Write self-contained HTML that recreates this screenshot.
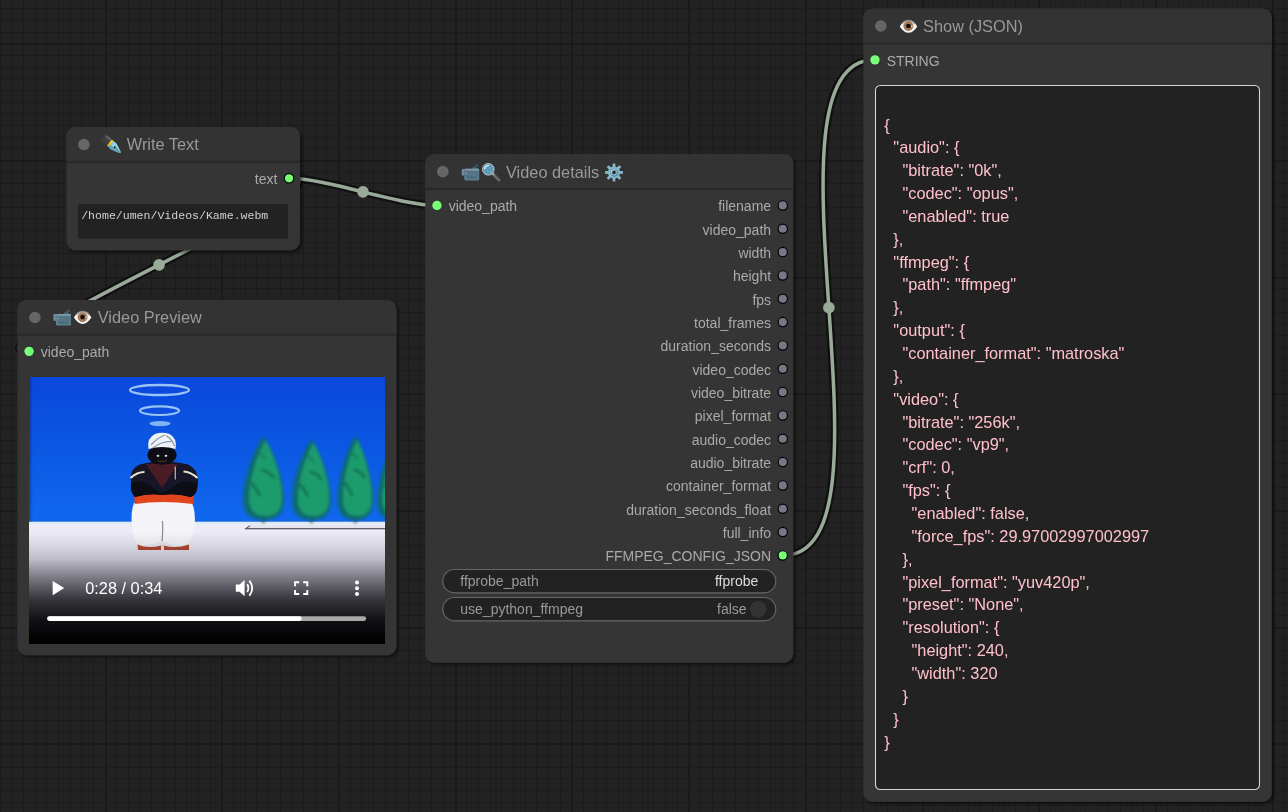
<!DOCTYPE html>
<html><head><meta charset="utf-8">
<style>
html,body{margin:0;padding:0;width:1288px;height:812px;overflow:hidden;background:#222;}
svg{display:block;position:absolute;left:0;top:0;will-change:transform;}
text{font-family:"Liberation Sans",sans-serif;}
.tt{font-size:16.33px;fill:#999;}
.sl{font-size:14px;fill:#AAA;}
.wl{font-size:14px;fill:#999;}
.wv{font-size:14px;fill:#DDD;}
.mono{font-family:"Liberation Mono",monospace;font-size:11.55px;fill:#d0d0d0;}
.js{font-size:16.33px;fill:#FFC0CB;white-space:pre;}
</style></head><body>
<svg width="1288" height="812" viewBox="0 0 1288 812">
<defs>
<filter id="pblur" x="-20%" y="-20%" width="140%" height="140%"><feGaussianBlur stdDeviation="0.3"/></filter>
<filter id="sh" x="-10%" y="-10%" width="120%" height="120%">
<feDropShadow dx="2.33" dy="2.33" stdDeviation="1.75" flood-color="#000" flood-opacity="0.5"/>
</filter>
</defs>
<rect width="1288" height="812" fill="#222"/>
<g shape-rendering="crispEdges"><rect x="0" y="0" width="1" height="812" fill="#1c1c1c"/><rect x="11" y="0" width="1" height="812" fill="#1c1c1c"/><rect x="23" y="0" width="1" height="812" fill="#1c1c1c"/><rect x="35" y="0" width="1" height="812" fill="#1c1c1c"/><rect x="46" y="0" width="1" height="812" fill="#1c1c1c"/><rect x="58" y="0" width="1" height="812" fill="#1c1c1c"/><rect x="70" y="0" width="1" height="812" fill="#1c1c1c"/><rect x="81" y="0" width="1" height="812" fill="#1c1c1c"/><rect x="93" y="0" width="1" height="812" fill="#1c1c1c"/><rect x="105" y="0" width="2" height="812" fill="#1a1a1a"/><rect x="116" y="0" width="1" height="812" fill="#1c1c1c"/><rect x="128" y="0" width="1" height="812" fill="#1c1c1c"/><rect x="140" y="0" width="1" height="812" fill="#1c1c1c"/><rect x="151" y="0" width="1" height="812" fill="#1c1c1c"/><rect x="163" y="0" width="1" height="812" fill="#1c1c1c"/><rect x="175" y="0" width="1" height="812" fill="#1c1c1c"/><rect x="186" y="0" width="1" height="812" fill="#1c1c1c"/><rect x="198" y="0" width="1" height="812" fill="#1c1c1c"/><rect x="210" y="0" width="1" height="812" fill="#1c1c1c"/><rect x="221" y="0" width="2" height="812" fill="#1a1a1a"/><rect x="233" y="0" width="1" height="812" fill="#1c1c1c"/><rect x="245" y="0" width="1" height="812" fill="#1c1c1c"/><rect x="256" y="0" width="1" height="812" fill="#1c1c1c"/><rect x="268" y="0" width="1" height="812" fill="#1c1c1c"/><rect x="280" y="0" width="1" height="812" fill="#1c1c1c"/><rect x="291" y="0" width="1" height="812" fill="#1c1c1c"/><rect x="303" y="0" width="1" height="812" fill="#1c1c1c"/><rect x="315" y="0" width="1" height="812" fill="#1c1c1c"/><rect x="326" y="0" width="1" height="812" fill="#1c1c1c"/><rect x="338" y="0" width="2" height="812" fill="#1a1a1a"/><rect x="350" y="0" width="1" height="812" fill="#1c1c1c"/><rect x="361" y="0" width="1" height="812" fill="#1c1c1c"/><rect x="373" y="0" width="1" height="812" fill="#1c1c1c"/><rect x="385" y="0" width="1" height="812" fill="#1c1c1c"/><rect x="396" y="0" width="1" height="812" fill="#1c1c1c"/><rect x="408" y="0" width="1" height="812" fill="#1c1c1c"/><rect x="420" y="0" width="1" height="812" fill="#1c1c1c"/><rect x="431" y="0" width="1" height="812" fill="#1c1c1c"/><rect x="443" y="0" width="1" height="812" fill="#1c1c1c"/><rect x="455" y="0" width="2" height="812" fill="#1a1a1a"/><rect x="466" y="0" width="1" height="812" fill="#1c1c1c"/><rect x="478" y="0" width="1" height="812" fill="#1c1c1c"/><rect x="490" y="0" width="1" height="812" fill="#1c1c1c"/><rect x="501" y="0" width="1" height="812" fill="#1c1c1c"/><rect x="513" y="0" width="1" height="812" fill="#1c1c1c"/><rect x="525" y="0" width="1" height="812" fill="#1c1c1c"/><rect x="536" y="0" width="1" height="812" fill="#1c1c1c"/><rect x="548" y="0" width="1" height="812" fill="#1c1c1c"/><rect x="560" y="0" width="1" height="812" fill="#1c1c1c"/><rect x="571" y="0" width="2" height="812" fill="#1a1a1a"/><rect x="583" y="0" width="1" height="812" fill="#1c1c1c"/><rect x="595" y="0" width="1" height="812" fill="#1c1c1c"/><rect x="606" y="0" width="1" height="812" fill="#1c1c1c"/><rect x="618" y="0" width="1" height="812" fill="#1c1c1c"/><rect x="630" y="0" width="1" height="812" fill="#1c1c1c"/><rect x="642" y="0" width="1" height="812" fill="#1c1c1c"/><rect x="653" y="0" width="1" height="812" fill="#1c1c1c"/><rect x="665" y="0" width="1" height="812" fill="#1c1c1c"/><rect x="677" y="0" width="1" height="812" fill="#1c1c1c"/><rect x="688" y="0" width="2" height="812" fill="#1a1a1a"/><rect x="700" y="0" width="1" height="812" fill="#1c1c1c"/><rect x="712" y="0" width="1" height="812" fill="#1c1c1c"/><rect x="723" y="0" width="1" height="812" fill="#1c1c1c"/><rect x="735" y="0" width="1" height="812" fill="#1c1c1c"/><rect x="747" y="0" width="1" height="812" fill="#1c1c1c"/><rect x="758" y="0" width="1" height="812" fill="#1c1c1c"/><rect x="770" y="0" width="1" height="812" fill="#1c1c1c"/><rect x="782" y="0" width="1" height="812" fill="#1c1c1c"/><rect x="793" y="0" width="1" height="812" fill="#1c1c1c"/><rect x="805" y="0" width="2" height="812" fill="#1a1a1a"/><rect x="817" y="0" width="1" height="812" fill="#1c1c1c"/><rect x="828" y="0" width="1" height="812" fill="#1c1c1c"/><rect x="840" y="0" width="1" height="812" fill="#1c1c1c"/><rect x="852" y="0" width="1" height="812" fill="#1c1c1c"/><rect x="863" y="0" width="1" height="812" fill="#1c1c1c"/><rect x="875" y="0" width="1" height="812" fill="#1c1c1c"/><rect x="887" y="0" width="1" height="812" fill="#1c1c1c"/><rect x="898" y="0" width="1" height="812" fill="#1c1c1c"/><rect x="910" y="0" width="1" height="812" fill="#1c1c1c"/><rect x="922" y="0" width="2" height="812" fill="#1a1a1a"/><rect x="933" y="0" width="1" height="812" fill="#1c1c1c"/><rect x="945" y="0" width="1" height="812" fill="#1c1c1c"/><rect x="957" y="0" width="1" height="812" fill="#1c1c1c"/><rect x="968" y="0" width="1" height="812" fill="#1c1c1c"/><rect x="980" y="0" width="1" height="812" fill="#1c1c1c"/><rect x="992" y="0" width="1" height="812" fill="#1c1c1c"/><rect x="1003" y="0" width="1" height="812" fill="#1c1c1c"/><rect x="1015" y="0" width="1" height="812" fill="#1c1c1c"/><rect x="1027" y="0" width="1" height="812" fill="#1c1c1c"/><rect x="1038" y="0" width="2" height="812" fill="#1a1a1a"/><rect x="1050" y="0" width="1" height="812" fill="#1c1c1c"/><rect x="1062" y="0" width="1" height="812" fill="#1c1c1c"/><rect x="1073" y="0" width="1" height="812" fill="#1c1c1c"/><rect x="1085" y="0" width="1" height="812" fill="#1c1c1c"/><rect x="1097" y="0" width="1" height="812" fill="#1c1c1c"/><rect x="1108" y="0" width="1" height="812" fill="#1c1c1c"/><rect x="1120" y="0" width="1" height="812" fill="#1c1c1c"/><rect x="1132" y="0" width="1" height="812" fill="#1c1c1c"/><rect x="1143" y="0" width="1" height="812" fill="#1c1c1c"/><rect x="1155" y="0" width="2" height="812" fill="#1a1a1a"/><rect x="1167" y="0" width="1" height="812" fill="#1c1c1c"/><rect x="1178" y="0" width="1" height="812" fill="#1c1c1c"/><rect x="1190" y="0" width="1" height="812" fill="#1c1c1c"/><rect x="1202" y="0" width="1" height="812" fill="#1c1c1c"/><rect x="1213" y="0" width="1" height="812" fill="#1c1c1c"/><rect x="1225" y="0" width="1" height="812" fill="#1c1c1c"/><rect x="1237" y="0" width="1" height="812" fill="#1c1c1c"/><rect x="1248" y="0" width="1" height="812" fill="#1c1c1c"/><rect x="1260" y="0" width="1" height="812" fill="#1c1c1c"/><rect x="1272" y="0" width="2" height="812" fill="#1a1a1a"/><rect x="1283" y="0" width="1" height="812" fill="#1c1c1c"/><rect x="0" y="8" width="1288" height="1" fill="#1c1c1c"/><rect x="0" y="20" width="1288" height="1" fill="#1c1c1c"/><rect x="0" y="32" width="1288" height="1" fill="#1c1c1c"/><rect x="0" y="43" width="1288" height="2" fill="#1a1a1a"/><rect x="0" y="55" width="1288" height="1" fill="#1c1c1c"/><rect x="0" y="67" width="1288" height="1" fill="#1c1c1c"/><rect x="0" y="78" width="1288" height="1" fill="#1c1c1c"/><rect x="0" y="90" width="1288" height="1" fill="#1c1c1c"/><rect x="0" y="102" width="1288" height="1" fill="#1c1c1c"/><rect x="0" y="113" width="1288" height="1" fill="#1c1c1c"/><rect x="0" y="125" width="1288" height="1" fill="#1c1c1c"/><rect x="0" y="137" width="1288" height="1" fill="#1c1c1c"/><rect x="0" y="148" width="1288" height="1" fill="#1c1c1c"/><rect x="0" y="160" width="1288" height="2" fill="#1a1a1a"/><rect x="0" y="172" width="1288" height="1" fill="#1c1c1c"/><rect x="0" y="183" width="1288" height="1" fill="#1c1c1c"/><rect x="0" y="195" width="1288" height="1" fill="#1c1c1c"/><rect x="0" y="207" width="1288" height="1" fill="#1c1c1c"/><rect x="0" y="218" width="1288" height="1" fill="#1c1c1c"/><rect x="0" y="230" width="1288" height="1" fill="#1c1c1c"/><rect x="0" y="242" width="1288" height="1" fill="#1c1c1c"/><rect x="0" y="253" width="1288" height="1" fill="#1c1c1c"/><rect x="0" y="265" width="1288" height="1" fill="#1c1c1c"/><rect x="0" y="277" width="1288" height="2" fill="#1a1a1a"/><rect x="0" y="288" width="1288" height="1" fill="#1c1c1c"/><rect x="0" y="300" width="1288" height="1" fill="#1c1c1c"/><rect x="0" y="312" width="1288" height="1" fill="#1c1c1c"/><rect x="0" y="323" width="1288" height="1" fill="#1c1c1c"/><rect x="0" y="335" width="1288" height="1" fill="#1c1c1c"/><rect x="0" y="347" width="1288" height="1" fill="#1c1c1c"/><rect x="0" y="358" width="1288" height="1" fill="#1c1c1c"/><rect x="0" y="370" width="1288" height="1" fill="#1c1c1c"/><rect x="0" y="382" width="1288" height="1" fill="#1c1c1c"/><rect x="0" y="393" width="1288" height="2" fill="#1a1a1a"/><rect x="0" y="405" width="1288" height="1" fill="#1c1c1c"/><rect x="0" y="417" width="1288" height="1" fill="#1c1c1c"/><rect x="0" y="428" width="1288" height="1" fill="#1c1c1c"/><rect x="0" y="440" width="1288" height="1" fill="#1c1c1c"/><rect x="0" y="452" width="1288" height="1" fill="#1c1c1c"/><rect x="0" y="463" width="1288" height="1" fill="#1c1c1c"/><rect x="0" y="475" width="1288" height="1" fill="#1c1c1c"/><rect x="0" y="487" width="1288" height="1" fill="#1c1c1c"/><rect x="0" y="498" width="1288" height="1" fill="#1c1c1c"/><rect x="0" y="510" width="1288" height="2" fill="#1a1a1a"/><rect x="0" y="522" width="1288" height="1" fill="#1c1c1c"/><rect x="0" y="533" width="1288" height="1" fill="#1c1c1c"/><rect x="0" y="545" width="1288" height="1" fill="#1c1c1c"/><rect x="0" y="557" width="1288" height="1" fill="#1c1c1c"/><rect x="0" y="568" width="1288" height="1" fill="#1c1c1c"/><rect x="0" y="580" width="1288" height="1" fill="#1c1c1c"/><rect x="0" y="592" width="1288" height="1" fill="#1c1c1c"/><rect x="0" y="603" width="1288" height="1" fill="#1c1c1c"/><rect x="0" y="615" width="1288" height="1" fill="#1c1c1c"/><rect x="0" y="627" width="1288" height="2" fill="#1a1a1a"/><rect x="0" y="638" width="1288" height="1" fill="#1c1c1c"/><rect x="0" y="650" width="1288" height="1" fill="#1c1c1c"/><rect x="0" y="662" width="1288" height="1" fill="#1c1c1c"/><rect x="0" y="673" width="1288" height="1" fill="#1c1c1c"/><rect x="0" y="685" width="1288" height="1" fill="#1c1c1c"/><rect x="0" y="697" width="1288" height="1" fill="#1c1c1c"/><rect x="0" y="708" width="1288" height="1" fill="#1c1c1c"/><rect x="0" y="720" width="1288" height="1" fill="#1c1c1c"/><rect x="0" y="732" width="1288" height="1" fill="#1c1c1c"/><rect x="0" y="743" width="1288" height="2" fill="#1a1a1a"/><rect x="0" y="755" width="1288" height="1" fill="#1c1c1c"/><rect x="0" y="767" width="1288" height="1" fill="#1c1c1c"/><rect x="0" y="778" width="1288" height="1" fill="#1c1c1c"/><rect x="0" y="790" width="1288" height="1" fill="#1c1c1c"/><rect x="0" y="802" width="1288" height="1" fill="#1c1c1c"/><rect x="0" y="813" width="1288" height="1" fill="#1c1c1c"/></g>
<path d="M289.05,178.33 C367.12,178.33 -49.00,351.33 29.07,351.33" stroke="rgba(0,0,0,0.5)" stroke-width="8.17" fill="none"/><path d="M289.05,178.33 C367.12,178.33 -49.00,351.33 29.07,351.33" stroke="#9A9" stroke-width="3.5" fill="none"/><circle cx="159.06" cy="264.83" r="5.83" fill="#9A9"/>
<path d="M289.05,178.33 C326.65,178.33 399.37,205.43 436.97,205.43" stroke="rgba(0,0,0,0.5)" stroke-width="8.17" fill="none"/><path d="M289.05,178.33 C326.65,178.33 399.37,205.43 436.97,205.43" stroke="#9A9" stroke-width="3.5" fill="none"/><circle cx="363.01" cy="191.88" r="5.83" fill="#9A9"/>
<path d="M782.75,555.42 C908.78,555.42 748.94,59.83 874.97,59.83" stroke="rgba(0,0,0,0.5)" stroke-width="8.17" fill="none"/><path d="M782.75,555.42 C908.78,555.42 748.94,59.83 874.97,59.83" stroke="#9A9" stroke-width="3.5" fill="none"/><circle cx="828.86" cy="307.63" r="5.83" fill="#9A9"/>
<path d="M75.73,127.0 H290.67 A9.33,9.33 0 0 1 300.0,136.33 V240.86999999999998 A9.33,9.33 0 0 1 290.67,250.2 H75.73 A9.33,9.33 0 0 1 66.4,240.86999999999998 V136.33 A9.33,9.33 0 0 1 75.73,127.0 Z" fill="#353535" filter="url(#sh)"/>
<path d="M75.73,127.0 H290.67 A9.33,9.33 0 0 1 300.0,136.33 V162.0 H66.4 V136.33 A9.33,9.33 0 0 1 75.73,127.0 Z" fill="#333"/>
<rect x="66.4" y="160.83" width="233.6" height="2.33" fill="rgba(0,0,0,0.2)"/>
<circle cx="83.9" cy="144.5" r="5.83" fill="#666"/>
<text x="126.80000000000001" y="150.32999999999998" class="tt">Write Text</text>
<g transform="translate(103.05,136.42) rotate(43) scale(1.0)">
<g filter="url(#pblur)">
<rect x="0.3" y="-3.7" width="9.8" height="7.4" rx="1.3" fill="#3e3e3e"/>
<rect x="1.6" y="-3.5" width="8" height="2.1" rx="1" fill="#676767"/>
</g>
<path d="M10.4,-3.7 L14,-4.2 Q18.5,-3 23.6,-0.8 L24.4,0 L23.6,0.8 Q18.5,3 14,4.2 L10.4,3.7 Z" fill="#8fd2e4"/>
<path d="M10.4,0.9 L18,0.9 L23.6,0.5 L24.4,0 L23.6,0.8 Q18.5,3 14,4.2 L10.4,3.7 Z" fill="#5aaabd"/>
<ellipse cx="9.9" cy="0" rx="1.15" ry="4.2" fill="#f0b800"/>
<ellipse cx="9.5" cy="-1.2" rx="0.55" ry="2.2" fill="#fbe24a"/>
<circle cx="16" cy="0" r="1" fill="#0e0e0e"/>
<circle cx="18" cy="0" r="0.55" fill="#16222a"/><circle cx="19.8" cy="0" r="0.55" fill="#16222a"/><circle cx="21.6" cy="0" r="0.5" fill="#16222a"/><circle cx="23.2" cy="0" r="0.45" fill="#16222a"/>
</g>
<circle cx="289.05" cy="178.32999999999998" r="4.67" fill="#7F7" stroke="#000" stroke-width="1.17"/><text x="277.38" y="184.16" class="sl" text-anchor="end">text</text>
<rect x="78" y="204.2" width="210" height="34.5" fill="#222"/>
<text x="81.2" y="218.8" class="mono">/home/umen/Videos/Kame.webm</text>
<path d="M434.63,154.1 H783.92 A9.33,9.33 0 0 1 793.25,163.43 V653.4699999999999 A9.33,9.33 0 0 1 783.92,662.8 H434.63 A9.33,9.33 0 0 1 425.3,653.4699999999999 V163.43 A9.33,9.33 0 0 1 434.63,154.1 Z" fill="#353535" filter="url(#sh)"/>
<path d="M434.63,154.1 H783.92 A9.33,9.33 0 0 1 793.25,163.43 V189.1 H425.3 V163.43 A9.33,9.33 0 0 1 434.63,154.1 Z" fill="#333"/>
<rect x="425.3" y="187.93" width="367.95" height="2.33" fill="rgba(0,0,0,0.2)"/>
<circle cx="442.8" cy="171.6" r="5.83" fill="#666"/>
<text x="506.0" y="178.43" class="tt">Video details</text>
<g transform="translate(461.7,164.8) scale(1.0)">
<path d="M11.2,3.6 L15.8,0.4" stroke="#3e5868" stroke-width="2" stroke-linecap="round"/>
<rect x="11.5" y="2.9" width="4.6" height="1.6" rx="0.6" fill="#4a6878"/>
<rect x="0" y="4.1" width="3" height="6.8" rx="1.1" fill="#6b8c9c"/>
<rect x="2.6" y="3.9" width="14.9" height="11.7" rx="1.4" fill="#5d7f8f"/>
<rect x="2.6" y="3.9" width="14.9" height="1.8" rx="0.9" fill="#7a9cad"/>
<rect x="4.6" y="6.4" width="11.5" height="7.6" rx="1.6" fill="#4c6c7c"/>
<rect x="5.6" y="7.2" width="9.8" height="4.2" rx="1" fill="#567686"/>
<circle cx="4.1" cy="5.3" r="0.75" fill="#e04848"/>
<circle cx="4.9" cy="8.4" r="0.55" fill="#a8ccdc"/>
</g>
<g transform="translate(481.8,163.2) scale(1.0)">
<path d="M11,10.6 L17.1,16.9" stroke="#6a6a6a" stroke-width="2.9" stroke-linecap="round"/>
<path d="M10.4,10 L12.2,11.8" stroke="#9a9a9a" stroke-width="2.4"/>
<circle cx="6.5" cy="6.1" r="5.8" fill="#5c9ab8" stroke="#c4c4c4" stroke-width="1"/>
<path d="M2.9,5.4 Q3.6,2.6 6.6,2.2" stroke="#e8f4fa" stroke-width="1.3" fill="none" stroke-linecap="round"/>
<path d="M8,9.4 Q9.6,8.8 10.2,7.6" stroke="#8cc0d8" stroke-width="0.9" fill="none"/>
</g>
<g transform="translate(614,172.4) scale(1.0)">
<path d="M-1.6,-5 L-1.25,-9 L1.25,-9 L1.6,-5 Z" transform="rotate(0)" fill="#8ab6c8"/><path d="M-1.6,-5 L-1.25,-9 L1.25,-9 L1.6,-5 Z" transform="rotate(45)" fill="#8ab6c8"/><path d="M-1.6,-5 L-1.25,-9 L1.25,-9 L1.6,-5 Z" transform="rotate(90)" fill="#8ab6c8"/><path d="M-1.6,-5 L-1.25,-9 L1.25,-9 L1.6,-5 Z" transform="rotate(135)" fill="#8ab6c8"/><path d="M-1.6,-5 L-1.25,-9 L1.25,-9 L1.6,-5 Z" transform="rotate(180)" fill="#8ab6c8"/><path d="M-1.6,-5 L-1.25,-9 L1.25,-9 L1.6,-5 Z" transform="rotate(225)" fill="#8ab6c8"/><path d="M-1.6,-5 L-1.25,-9 L1.25,-9 L1.6,-5 Z" transform="rotate(270)" fill="#8ab6c8"/><path d="M-1.6,-5 L-1.25,-9 L1.25,-9 L1.6,-5 Z" transform="rotate(315)" fill="#8ab6c8"/>
<circle r="6" fill="#8ab6c8"/>
<circle r="3.6" fill="none" stroke="#6aa4b8" stroke-width="0.8"/>
<path d="M-1.5,2.8 A3,3 0 0 0 2.8,-1.5" stroke="#4a8ca4" stroke-width="1.1" fill="none"/>
<path d="M-2.5,0.5 A2.6,2.6 0 0 1 0.5,-2.5" stroke="#c8e4ec" stroke-width="0.9" fill="none"/>
<circle r="1.8" fill="#2a2a2a"/>
</g>
<circle cx="436.97" cy="205.43" r="4.67" fill="#7F7"/><text x="448.64000000000004" y="211.26000000000002" class="sl">video_path</text>
<circle cx="782.75" cy="205.43" r="4.67" fill="#778" stroke="#000" stroke-width="1.17"/><text x="771.08" y="211.26000000000002" class="sl" text-anchor="end">filename</text>
<circle cx="782.75" cy="228.763" r="4.67" fill="#778" stroke="#000" stroke-width="1.17"/><text x="771.08" y="234.59300000000002" class="sl" text-anchor="end">video_path</text>
<circle cx="782.75" cy="252.096" r="4.67" fill="#778" stroke="#000" stroke-width="1.17"/><text x="771.08" y="257.926" class="sl" text-anchor="end">width</text>
<circle cx="782.75" cy="275.429" r="4.67" fill="#778" stroke="#000" stroke-width="1.17"/><text x="771.08" y="281.25899999999996" class="sl" text-anchor="end">height</text>
<circle cx="782.75" cy="298.762" r="4.67" fill="#778" stroke="#000" stroke-width="1.17"/><text x="771.08" y="304.592" class="sl" text-anchor="end">fps</text>
<circle cx="782.75" cy="322.095" r="4.67" fill="#778" stroke="#000" stroke-width="1.17"/><text x="771.08" y="327.925" class="sl" text-anchor="end">total_frames</text>
<circle cx="782.75" cy="345.428" r="4.67" fill="#778" stroke="#000" stroke-width="1.17"/><text x="771.08" y="351.258" class="sl" text-anchor="end">duration_seconds</text>
<circle cx="782.75" cy="368.76099999999997" r="4.67" fill="#778" stroke="#000" stroke-width="1.17"/><text x="771.08" y="374.59099999999995" class="sl" text-anchor="end">video_codec</text>
<circle cx="782.75" cy="392.094" r="4.67" fill="#778" stroke="#000" stroke-width="1.17"/><text x="771.08" y="397.924" class="sl" text-anchor="end">video_bitrate</text>
<circle cx="782.75" cy="415.427" r="4.67" fill="#778" stroke="#000" stroke-width="1.17"/><text x="771.08" y="421.257" class="sl" text-anchor="end">pixel_format</text>
<circle cx="782.75" cy="438.76" r="4.67" fill="#778" stroke="#000" stroke-width="1.17"/><text x="771.08" y="444.59" class="sl" text-anchor="end">audio_codec</text>
<circle cx="782.75" cy="462.093" r="4.67" fill="#778" stroke="#000" stroke-width="1.17"/><text x="771.08" y="467.923" class="sl" text-anchor="end">audio_bitrate</text>
<circle cx="782.75" cy="485.426" r="4.67" fill="#778" stroke="#000" stroke-width="1.17"/><text x="771.08" y="491.256" class="sl" text-anchor="end">container_format</text>
<circle cx="782.75" cy="508.75899999999996" r="4.67" fill="#778" stroke="#000" stroke-width="1.17"/><text x="771.08" y="514.5889999999999" class="sl" text-anchor="end">duration_seconds_float</text>
<circle cx="782.75" cy="532.092" r="4.67" fill="#778" stroke="#000" stroke-width="1.17"/><text x="771.08" y="537.922" class="sl" text-anchor="end">full_info</text>
<circle cx="782.75" cy="555.425" r="4.67" fill="#7F7" stroke="#000" stroke-width="1.17"/><text x="771.08" y="561.255" class="sl" text-anchor="end">FFMPEG_CONFIG_JSON</text>
<rect x="442.8" y="569.5" width="332.95" height="23.33" rx="11.67" fill="#222" stroke="#666" stroke-width="1.17"/>
<text x="460.3" y="585.83" class="wl">ffprobe_path</text>
<text x="758.25" y="585.83" class="wv" text-anchor="end">ffprobe</text>
<rect x="442.8" y="597.5" width="332.95" height="23.33" rx="11.67" fill="#222" stroke="#666" stroke-width="1.17"/>
<text x="460.3" y="613.83" class="wl">use_python_ffmpeg</text>
<circle cx="758.25" cy="609.17" r="8.4" fill="#333"/>
<text x="746.58" y="613.83" class="wl" text-anchor="end">false</text>
<path d="M26.729999999999997,300.0 H387.07 A9.33,9.33 0 0 1 396.4,309.33 V645.9699999999999 A9.33,9.33 0 0 1 387.07,655.3 H26.729999999999997 A9.33,9.33 0 0 1 17.4,645.9699999999999 V309.33 A9.33,9.33 0 0 1 26.729999999999997,300.0 Z" fill="#353535" filter="url(#sh)"/>
<path d="M26.729999999999997,300.0 H387.07 A9.33,9.33 0 0 1 396.4,309.33 V335.0 H17.4 V309.33 A9.33,9.33 0 0 1 26.729999999999997,300.0 Z" fill="#333"/>
<rect x="17.4" y="333.83" width="379.0" height="2.33" fill="rgba(0,0,0,0.2)"/>
<circle cx="34.9" cy="317.5" r="5.83" fill="#666"/>
<text x="97.75" y="323.33" class="tt">Video Preview</text>
<circle cx="29.07" cy="351.33" r="4.67" fill="#7F7"/><text x="40.74" y="357.15999999999997" class="sl">video_path</text>
<filter id="vblur" x="-5%" y="-5%" width="110%" height="110%"><feGaussianBlur stdDeviation="0.6"/></filter><filter id="vblur2" x="-10%" y="-10%" width="120%" height="120%"><feGaussianBlur stdDeviation="1.6"/></filter>
<clipPath id="vclip"><rect x="28" y="376" width="358" height="268"/></clipPath>
<linearGradient id="sky" x1="0" y1="0" x2="0" y2="1">
<stop offset="0" stop-color="#0947dc"/><stop offset="0.5" stop-color="#0c58e2"/><stop offset="1" stop-color="#1068ee"/></linearGradient>
<linearGradient id="snow" x1="0" y1="0" x2="0" y2="1">
<stop offset="0" stop-color="#eeecf6"/><stop offset="0.3" stop-color="#e6e4f2"/><stop offset="1" stop-color="#c0c0d4"/></linearGradient>
<linearGradient id="ctl" gradientUnits="userSpaceOnUse" x1="0" y1="532" x2="0" y2="640">
<stop offset="0" stop-color="#060609" stop-opacity="0"/>
<stop offset="0.12" stop-color="#060609" stop-opacity="0.07"/>
<stop offset="0.25" stop-color="#060609" stop-opacity="0.18"/>
<stop offset="0.4" stop-color="#060609" stop-opacity="0.42"/>
<stop offset="0.63" stop-color="#060609" stop-opacity="0.78"/>
<stop offset="0.81" stop-color="#060609" stop-opacity="0.94"/>
<stop offset="1" stop-color="#000" stop-opacity="1"/>
</linearGradient>
<g clip-path="url(#vclip)"><rect x="28" y="376" width="358" height="145.79999999999995" fill="url(#sky)"/>
<rect x="28" y="521.8" width="358" height="122.20000000000005" fill="url(#snow)"/>
<rect x="28" y="521.8" width="358" height="2" fill="#cfeefc" opacity="0.8"/>
<path d="M244.5,529 L249,525.5 L386,525.5 L386,529 Z" fill="#e4e4ee" filter="url(#vblur)"/>
<rect x="245" y="528" width="141" height="1.3" fill="#60606c" filter="url(#vblur)"/>
<path d="M244.6,529 L249.5,525.2 L250.3,526 L246,529.3 Z" fill="#60606c" filter="url(#vblur)"/>
<g filter="url(#vblur2)">
<rect x="262.5" y="517" width="2" height="6" fill="#2a3a38"/>
<path d="M263.5,436.5 C271.7,446.52 284.0,478.25 284.0,499.125 C284.0,515.825 274.98,520 263.5,520 C252.02,520 243.0,515.825 243.0,499.125 C243.0,478.25 255.3,446.52 263.5,436.5 Z" fill="#0f6a6e"/>
<path d="M265.55,440.675 C272.11,449.69300000000004 281.95,478.25 281.95,497.0375 C281.95,512.0675 274.73400000000004,515.825 265.55,515.825 C256.366,515.825 249.15,512.0675 249.15,497.0375 C249.15,478.25 258.99,449.69300000000004 265.55,440.675 Z" fill="#1f9c6c"/>
<path d="M261.45,469.9 q8.200000000000001,1.67 13.120000000000001,8.35" stroke="#0f6a50" stroke-width="2.6" fill="none"/>
<path d="M251.2,482.425 q6.1499999999999995,8.35 9.02,13.36" stroke="#0f6a50" stroke-width="2.6" fill="none"/>
<path d="M259.4,453.2 q4.1000000000000005,2.505 6.1499999999999995,6.68" stroke="#137a58" stroke-width="2" fill="none"/>
</g>
<g filter="url(#vblur2)">
<rect x="310.5" y="517" width="2" height="6" fill="#2a3a38"/>
<path d="M311.5,439.5 C319.3,449.16 331.0,479.75 331.0,499.875 C331.0,515.975 322.42,520 311.5,520 C300.58,520 292.0,515.975 292.0,499.875 C292.0,479.75 303.7,449.16 311.5,439.5 Z" fill="#0f6a6e"/>
<path d="M313.45,443.525 C319.69,452.219 329.05,479.75 329.05,497.8625 C329.05,512.3525 322.186,515.975 313.45,515.975 C304.714,515.975 297.84999999999997,512.3525 297.84999999999997,497.8625 C297.84999999999997,479.75 307.21,452.219 313.45,443.525 Z" fill="#1f9c6c"/>
<path d="M309.55,471.7 q7.800000000000001,1.61 12.48,8.05" stroke="#0f6a50" stroke-width="2.6" fill="none"/>
<path d="M299.8,483.775 q5.85,8.05 8.58,12.88" stroke="#0f6a50" stroke-width="2.6" fill="none"/>
<path d="M307.6,455.6 q3.9000000000000004,2.415 5.85,6.44" stroke="#137a58" stroke-width="2" fill="none"/>
</g>
<g filter="url(#vblur2)">
<rect x="354.4" y="517" width="2" height="6" fill="#2a3a38"/>
<path d="M355.4,436 C362.59999999999997,446.08 373.4,478.0 373.4,499.0 C373.4,515.8 365.47999999999996,520 355.4,520 C345.32,520 337.4,515.8 337.4,499.0 C337.4,478.0 348.2,446.08 355.4,436 Z" fill="#0f6a6e"/>
<path d="M357.2,440.2 C362.96,449.272 371.59999999999997,478.0 371.59999999999997,496.9 C371.59999999999997,512.02 365.264,515.8 357.2,515.8 C349.13599999999997,515.8 342.8,512.02 342.8,496.9 C342.8,478.0 351.44,449.272 357.2,440.2 Z" fill="#1f9c6c"/>
<path d="M353.59999999999997,469.6 q7.2,1.68 11.52,8.4" stroke="#0f6a50" stroke-width="2.6" fill="none"/>
<path d="M344.59999999999997,482.2 q5.3999999999999995,8.4 7.92,13.44" stroke="#0f6a50" stroke-width="2.6" fill="none"/>
<path d="M351.79999999999995,452.8 q3.6,2.52 5.3999999999999995,6.72" stroke="#137a58" stroke-width="2" fill="none"/>
</g>
<g filter="url(#vblur2)">
<rect x="394" y="517" width="2" height="6" fill="#2a3a38"/>
<path d="M395,440 C402.2,449.6 413.0,480.0 413.0,500.0 C413.0,516.0 405.08,520 395,520 C384.92,520 377.0,516.0 377.0,500.0 C377.0,480.0 387.8,449.6 395,440 Z" fill="#0f6a6e"/>
<path d="M396.8,444.0 C402.56,452.64 411.2,480.0 411.2,498.0 C411.2,512.4 404.86400000000003,516.0 396.8,516.0 C388.736,516.0 382.40000000000003,512.4 382.40000000000003,498.0 C382.40000000000003,480.0 391.04,452.64 396.8,444.0 Z" fill="#1f9c6c"/>
<path d="M393.2,472.0 q7.2,1.6 11.52,8.0" stroke="#0f6a50" stroke-width="2.6" fill="none"/>
<path d="M384.2,484.0 q5.3999999999999995,8.0 7.92,12.8" stroke="#0f6a50" stroke-width="2.6" fill="none"/>
<path d="M391.4,456.0 q3.6,2.4 5.3999999999999995,6.4" stroke="#137a58" stroke-width="2" fill="none"/>
</g>
<g filter="url(#vblur)"><ellipse cx="159.5" cy="390" rx="29.5" ry="5" fill="none" stroke="#a8d0fa" stroke-width="2.3" opacity="0.9"/><ellipse cx="159.5" cy="410.7" rx="19.5" ry="4.3" fill="none" stroke="#a8d0fa" stroke-width="2.2" opacity="0.9"/><ellipse cx="160" cy="423.6" rx="10.5" ry="2.6" fill="#7eb4f4"/></g>
<g filter="url(#vblur)"><path d="M134,503 Q162,499 192,503 Q196,512 194.5,526 Q193,540 186,545 Q175,547 164,541 Q162,540 160,541 Q149,547 139,545 Q133,540 132,526 Q130.5,512 134,503 Z" fill="#f4f4f8"/><path d="M162.5,521 Q163,533 162,541" stroke="#8a8a96" stroke-width="1.2" fill="none"/><path d="M137.5,544.5 Q148,549 161,545.5 L161,550 L138,550 Z" fill="#b04a30"/><path d="M164,545.5 Q176,549 189,544.5 L189,550 L164,550 Z" fill="#b04a30"/><circle cx="162.5" cy="546" r="1.8" fill="#e0d8d0"/><path d="M134,495 Q162,491 194,495 L193,504 Q162,500 135,504 Z" fill="#e2441e"/><path d="M131,482 Q129,469 140,464.5 Q150,461.5 162,461.5 Q176,461.5 188,464.5 Q198.5,469 198,482 Q198,494 191,497 Q176,493 162,495 Q148,493 135,497 Q130,492 131,482 Z" fill="#141428"/><path d="M146,464 L162,488 L178,464 Z" fill="#4a1c28"/><path d="M131,484 Q140,478 150,486 Q158,492 162,493 Q166,492 174,486 Q184,478 197,484 Q198,494 191,497 Q176,493 162,495 Q148,493 135,497 Q130,492 131,484 Z" fill="#0c0a14"/><path d="M130.5,478 Q137,472 144.5,472" stroke="#e8e0d0" stroke-width="2.2" fill="none"/><path d="M183.5,471.5 Q191,472 197.5,478" stroke="#e8e0d0" stroke-width="2.2" fill="none"/><path d="M175.3,466.5 L175.3,479.5" stroke="#c8b8b0" stroke-width="1.2"/><ellipse cx="162" cy="455" rx="14.5" ry="9.8" fill="#0e0c12"/><ellipse cx="158" cy="455.8" rx="1.4" ry="1.1" fill="#d8d8d8"/><ellipse cx="166" cy="455.8" rx="1.4" ry="1.1" fill="#d8d8d8"/><path d="M157,460.5 Q162,462.5 167,460.5" stroke="#3a2a28" stroke-width="1.4" fill="none"/><path d="M148.5,449 Q146.5,438 155,434 Q162,431.5 169.5,434 Q177.5,438 175.5,449 Q162,445 148.5,449 Z" fill="#eef2f6"/><path d="M151,445 Q157,438 165,435 M152.5,448 Q162,441 173,441.5 M166,435.5 Q172,439 174.5,446" stroke="#8898b0" stroke-width="1.2" fill="none"/></g>
<linearGradient id="lvig" x1="0" y1="0" x2="1" y2="0"><stop offset="0" stop-color="#001040" stop-opacity="0.35"/><stop offset="1" stop-color="#001040" stop-opacity="0"/></linearGradient>
<rect x="29" y="376" width="4" height="145.79999999999995" fill="url(#lvig)"/>
<rect x="29" y="532" width="356" height="112" fill="url(#ctl)"/>
<rect x="28" y="376" width="1" height="268" fill="#3a3428"/>
<rect x="28" y="376" width="358" height="1" fill="#3a3428"/>
<rect x="385" y="376" width="1" height="268" fill="#3a3428"/>
<path d="M52.7,581 L64.2,588.1 L52.7,595.2 Z" fill="#fff"/>
<text x="85.2" y="593.6" style="font-family:'Liberation Sans',sans-serif;font-size:16.33px;fill:#fff">0:28 / 0:34</text>
<path d="M235.8,584.6 L239.6,584.6 L244.6,580 L244.6,596.3 L239.6,591.7 L235.8,591.7 Z" fill="#fff"/>
<path d="M247.2,584.2 Q249.6,588.1 247.2,592" stroke="#fff" stroke-width="1.8" fill="none"/>
<path d="M249.4,580.6 Q255,588.1 249.4,595.8" stroke="#fff" stroke-width="1.8" fill="none"/>
<path d="M295.1,586.2 V582.2 H299.2 M303.2,582.2 H307.3 V586.2 M307.3,590 V594 H303.2 M299.2,594 H295.1 V590" stroke="#fff" stroke-width="1.9" fill="none"/>
<circle cx="357" cy="582.4" r="2" fill="#fff"/>
<circle cx="357" cy="588.2" r="2" fill="#fff"/>
<circle cx="357" cy="593.9" r="2" fill="#fff"/>
<rect x="47.2" y="616.2" width="319" height="4.7" rx="2.35" fill="#a8a8a8"/>
<rect x="47.2" y="616.2" width="254.5" height="4.7" rx="2.35" fill="#fff"/></g>
<g transform="translate(53.4,310.0) scale(1.0)">
<path d="M11.2,3.6 L15.8,0.4" stroke="#3e5868" stroke-width="2" stroke-linecap="round"/>
<rect x="11.5" y="2.9" width="4.6" height="1.6" rx="0.6" fill="#4a6878"/>
<rect x="0" y="4.1" width="3" height="6.8" rx="1.1" fill="#6b8c9c"/>
<rect x="2.6" y="3.9" width="14.9" height="11.7" rx="1.4" fill="#5d7f8f"/>
<rect x="2.6" y="3.9" width="14.9" height="1.8" rx="0.9" fill="#7a9cad"/>
<rect x="4.6" y="6.4" width="11.5" height="7.6" rx="1.6" fill="#4c6c7c"/>
<rect x="5.6" y="7.2" width="9.8" height="4.2" rx="1" fill="#567686"/>
<circle cx="4.1" cy="5.3" r="0.75" fill="#e04848"/>
<circle cx="4.9" cy="8.4" r="0.55" fill="#a8ccdc"/>
</g>
<g transform="translate(82.65,317.5) scale(1.0)">
<path d="M-8.75,0 Q-4.6,-6.4 0,-6.4 Q4.6,-6.4 8.75,0 Q4.6,6.4 0,6.4 Q-4.6,6.4 -8.75,0 Z" fill="#f6f8fa"/>
<path d="M-6.8,-2.6 Q-3.6,-6.1 0,-6.1 Q3.6,-6.1 6.8,-2.6" fill="none" stroke="#8a8a8a" stroke-width="1.2"/>
<circle cx="-0.1" cy="-0.4" r="4.7" fill="#a67a5a"/>
<circle cx="-0.1" cy="-0.4" r="4.7" fill="none" stroke="#8e6446" stroke-width="0.5"/>
<circle cx="-0.1" cy="-0.4" r="2.35" fill="#111"/>
<circle cx="3.4" cy="-0.3" r="0.9" fill="#e4c4a8"/>
</g>
<path d="M872.63,8.5 H1262.47 A9.33,9.33 0 0 1 1271.8,17.83 V792.4699999999999 A9.33,9.33 0 0 1 1262.47,801.8 H872.63 A9.33,9.33 0 0 1 863.3,792.4699999999999 V17.83 A9.33,9.33 0 0 1 872.63,8.5 Z" fill="#353535" filter="url(#sh)"/>
<path d="M872.63,8.5 H1262.47 A9.33,9.33 0 0 1 1271.8,17.83 V43.5 H863.3 V17.83 A9.33,9.33 0 0 1 872.63,8.5 Z" fill="#333"/>
<rect x="863.3" y="42.33" width="408.5" height="2.33" fill="rgba(0,0,0,0.2)"/>
<circle cx="880.8" cy="26.0" r="5.83" fill="#666"/>
<text x="923.0999999999999" y="31.83" class="tt">Show (JSON)</text>
<g transform="translate(908.5,26.4) scale(1.0)">
<path d="M-8.75,0 Q-4.6,-6.4 0,-6.4 Q4.6,-6.4 8.75,0 Q4.6,6.4 0,6.4 Q-4.6,6.4 -8.75,0 Z" fill="#f6f8fa"/>
<path d="M-6.8,-2.6 Q-3.6,-6.1 0,-6.1 Q3.6,-6.1 6.8,-2.6" fill="none" stroke="#8a8a8a" stroke-width="1.2"/>
<circle cx="-0.1" cy="-0.4" r="4.7" fill="#a67a5a"/>
<circle cx="-0.1" cy="-0.4" r="4.7" fill="none" stroke="#8e6446" stroke-width="0.5"/>
<circle cx="-0.1" cy="-0.4" r="2.35" fill="#111"/>
<circle cx="3.4" cy="-0.3" r="0.9" fill="#e4c4a8"/>
</g>
<circle cx="874.9699999999999" cy="59.83" r="4.67" fill="#7F7"/><text x="886.6399999999999" y="65.66" class="sl">STRING</text>
<rect x="875.5" y="85.5" width="384.0" height="704.0" rx="4.7" fill="#222" stroke="#d4d4d4" stroke-width="1.1"/>
<text x="884.3" y="131.40" class="js" xml:space="preserve">{</text>
<text x="884.3" y="153.26" class="js" xml:space="preserve">  &quot;audio&quot;: {</text>
<text x="884.3" y="176.11" class="js" xml:space="preserve">    &quot;bitrate&quot;: &quot;0k&quot;,</text>
<text x="884.3" y="198.97" class="js" xml:space="preserve">    &quot;codec&quot;: &quot;opus&quot;,</text>
<text x="884.3" y="221.83" class="js" xml:space="preserve">    &quot;enabled&quot;: true</text>
<text x="884.3" y="244.69" class="js" xml:space="preserve">  },</text>
<text x="884.3" y="267.54" class="js" xml:space="preserve">  &quot;ffmpeg&quot;: {</text>
<text x="884.3" y="290.40" class="js" xml:space="preserve">    &quot;path&quot;: &quot;ffmpeg&quot;</text>
<text x="884.3" y="313.26" class="js" xml:space="preserve">  },</text>
<text x="884.3" y="336.11" class="js" xml:space="preserve">  &quot;output&quot;: {</text>
<text x="884.3" y="358.97" class="js" xml:space="preserve">    &quot;container_format&quot;: &quot;matroska&quot;</text>
<text x="884.3" y="381.83" class="js" xml:space="preserve">  },</text>
<text x="884.3" y="404.68" class="js" xml:space="preserve">  &quot;video&quot;: {</text>
<text x="884.3" y="427.54" class="js" xml:space="preserve">    &quot;bitrate&quot;: &quot;256k&quot;,</text>
<text x="884.3" y="450.40" class="js" xml:space="preserve">    &quot;codec&quot;: &quot;vp9&quot;,</text>
<text x="884.3" y="473.25" class="js" xml:space="preserve">    &quot;crf&quot;: 0,</text>
<text x="884.3" y="496.11" class="js" xml:space="preserve">    &quot;fps&quot;: {</text>
<text x="884.3" y="518.97" class="js" xml:space="preserve">      &quot;enabled&quot;: false,</text>
<text x="884.3" y="541.83" class="js" xml:space="preserve">      &quot;force_fps&quot;: 29.97002997002997</text>
<text x="884.3" y="564.68" class="js" xml:space="preserve">    },</text>
<text x="884.3" y="587.54" class="js" xml:space="preserve">    &quot;pixel_format&quot;: &quot;yuv420p&quot;,</text>
<text x="884.3" y="610.40" class="js" xml:space="preserve">    &quot;preset&quot;: &quot;None&quot;,</text>
<text x="884.3" y="633.25" class="js" xml:space="preserve">    &quot;resolution&quot;: {</text>
<text x="884.3" y="656.11" class="js" xml:space="preserve">      &quot;height&quot;: 240,</text>
<text x="884.3" y="678.97" class="js" xml:space="preserve">      &quot;width&quot;: 320</text>
<text x="884.3" y="701.82" class="js" xml:space="preserve">    }</text>
<text x="884.3" y="724.68" class="js" xml:space="preserve">  }</text>
<text x="884.3" y="747.54" class="js" xml:space="preserve">}</text>
</svg>
</body></html>
